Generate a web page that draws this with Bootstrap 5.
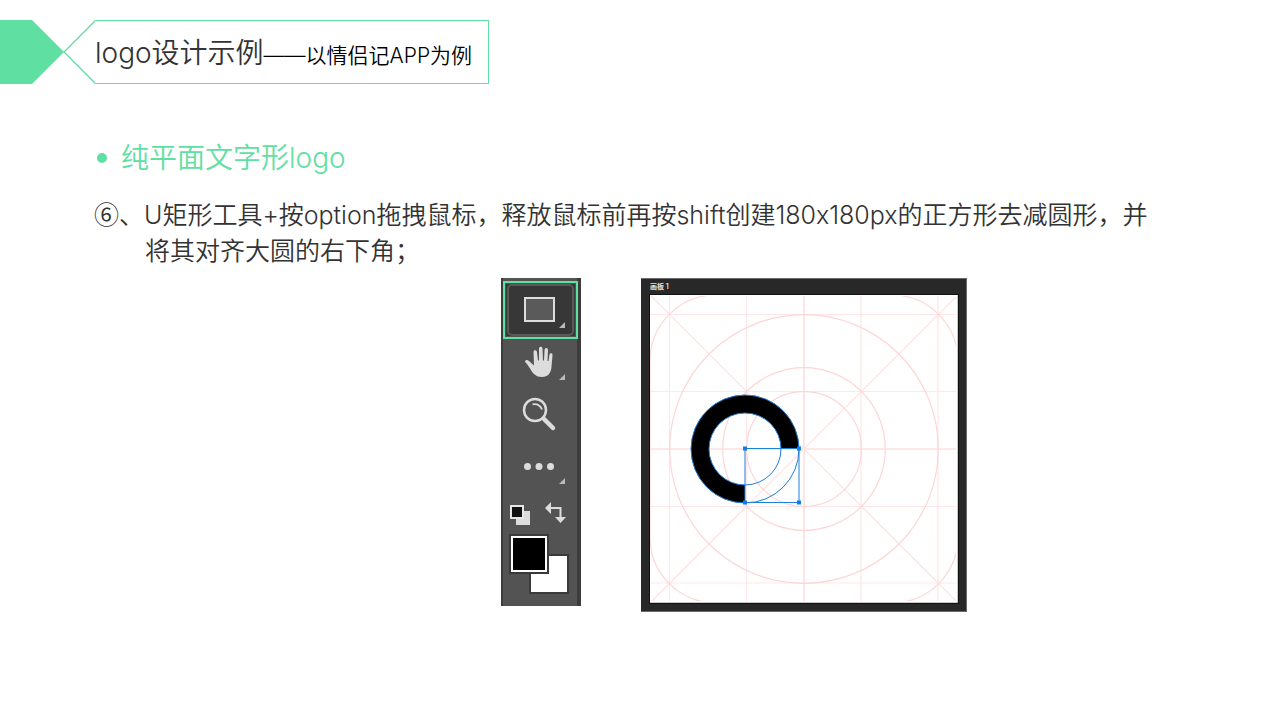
<!DOCTYPE html>
<html lang="zh-CN">
<head>
<meta charset="utf-8">
<meta name="viewport" content="width=device-width, initial-scale=1">
<title>logo设计示例</title>
<link href="https://cdn.jsdelivr.net/npm/bootstrap@5.3.0/dist/css/bootstrap.min.css" rel="stylesheet">
<style>
  :root { --mint: #5fe0a2; --panel: #535353; --panel-edge: #3c3c3c; }
  body { font-family: Inter, "Noto Sans CJK SC", sans-serif; font-weight: 350; color: #333; background: #fff; }
  .banner { padding-top: 20px; }
  .banner-title { height: 64px; border: 1px solid var(--mint); border-left: 0; padding-right: 16px; }
  .banner-title h1 { font-size: 28px; font-weight: 350; line-height: 64px; }
  .banner-title small { font-size: 21px; font-weight: 350; color: #000; }
  .content { padding: 54px 120px 0 95px; }
  .topic { font-size: 28px; font-weight: 350; line-height: 40px; color: var(--mint); gap: 14px; }
  .topic-dot { width: 10px; height: 10px; margin-left: 2px; background: var(--mint); }
  .step { font-size: 25px; line-height: 36px; margin-top: 19px; }
  .step-text { padding-left: 50px; text-indent: -51px; }
  .step-number { font-family: "Noto Sans CJK SC", sans-serif; line-height: 1; }
  .figures { gap: 60px; margin: 9px 0 0 406px; }
  .tool-panel { width: 80px; padding: 6px 0 0 3px; background: var(--panel); border: solid var(--panel-edge); border-width: 0 4px 0 2px; }
  .tool { width: 69px; height: 52px; background: transparent; border: 0; padding: 0; }
  .tool.active { background: #373737; outline: 2px solid var(--mint); outline-offset: 1px; }
  .swatches { margin-left: -3px; }
</style>
</head>
<body>
<header class="banner d-flex">
  <svg width="95" height="64" viewBox="0 0 95 64" class="flex-shrink-0" aria-hidden="true">
    <path d="M0 0H32L64 32L32 64H0Z" fill="#5fe0a2"/>
    <path d="M95.5 .5L64 32L95.5 63.5" fill="none" stroke="#5fe0a2" stroke-width="1.3"/>
  </svg>
  <div class="banner-title">
    <h1 class="mb-0 text-nowrap">logo设计示例<small>——以情侣记APP为例</small></h1>
  </div>
</header>
<main class="content">
  <h2 class="topic d-flex align-items-center mb-0"><span class="topic-dot rounded-circle"></span>纯平面文字形logo</h2>
  <div class="step"><p class="step-text mb-0"><span class="step-number">⑥、</span>U矩形工具+按option拖拽鼠标，释放鼠标前再按shift创建180x180px的正方形去减圆形，并将其对齐大圆的右下角；</p></div>
  <div class="figures d-flex align-items-start">
    <div class="tool-panel d-flex flex-column flex-shrink-0" role="toolbar" aria-label="工具">
      <button class="tool active" type="button" aria-label="矩形工具">
        <svg class="d-block" width="69" height="52" viewBox="0 0 69 52"><rect x="2" y="1" width="65" height="50" rx="4" fill="none" stroke="#595959" stroke-width="2"/><rect x="19" y="14" width="29" height="23" fill="#5a5a5a" stroke="#dcdcdc" stroke-width="2"/><path d="M59 38v6h-6z" fill="#b9b9b9"/></svg>
      </button>
      <button class="tool" type="button" aria-label="抓手工具">
        <svg class="d-block" width="69" height="52" viewBox="0 0 69 52"><path d="M27.5 37.500C25 35 22.500 29 19.500 26.500C18 24 21 23 23 25L28 29.500L27.500 16C27.500 13.500 30.800 13.500 31 16L32 24.500H33L33 12.500C33 10 36.500 10 36.500 12.500L37 24.500H38L38.600 13.500C38.800 11.300 42 11.300 42 14L41.500 25H42.500L43.500 18.500C44 16.500 46.800 17 46.500 19L45.500 31C45 37 42 41 36 41C32 41 30 40 27.500 37.500Z" fill="#dcdcdc"/><path d="M59 38v6h-6z" fill="#b9b9b9"/></svg>
      </button>
      <button class="tool" type="button" aria-label="缩放工具">
        <svg class="d-block" width="69" height="52" viewBox="0 0 69 52"><circle cx="29" cy="22" r="11" fill="none" stroke="#dcdcdc" stroke-width="2.500"/><path d="M26.500 16.300C31 15.500 34.500 18 36 21.500" fill="none" stroke="#dcdcdc" stroke-width="1.800"/><path d="M38 31L47 40" stroke="#dcdcdc" stroke-width="4.500" stroke-linecap="round"/><path d="M36.500 29.500L39 32" stroke="#dcdcdc" stroke-width="2.500"/></svg>
      </button>
      <button class="tool" type="button" aria-label="编辑工具栏">
        <svg class="d-block" width="69" height="52" viewBox="0 0 69 52"><g fill="#dcdcdc"><circle cx="21.500" cy="26.500" r="3.500"/><circle cx="33" cy="26.500" r="3.500"/><circle cx="44.500" cy="26.500" r="3.500"/></g><path d="M59 38v6h-6z" fill="#b9b9b9"/></svg>
      </button>
      <svg class="swatches d-block" width="74" height="114" viewBox="503 492 74 114" role="img" aria-label="前景色和背景色">
        <path d="M516 511h14v14h-14z" fill="#dcdcdc"/><rect x="511" y="506" width="12" height="12" fill="#111" stroke="#e6e6e6" stroke-width="2"/>
        <path d="M545 508L551 502V514ZM555 517H566L560.500 523Z" fill="#dcdcdc"/><path d="M551 508H560.500V517" fill="none" stroke="#dcdcdc" stroke-width="2"/>
        <rect x="530" y="555" width="38" height="38" fill="#fff" stroke="#3a3a3a" stroke-width="2"/>
        <rect x="509" y="534" width="40" height="40" fill="#3a3a3a"/><rect x="512" y="537" width="34" height="34" fill="#000" stroke="#fff" stroke-width="2"/>
      </svg>
    </div>
    <svg class="flex-shrink-0" width="326" height="334" viewBox="641 278 326 334" role="img" aria-label="画板 1">
      <defs><clipPath id="board"><rect x="650" y="296" width="306" height="305"/></clipPath></defs>
      <rect x="641" y="278" width="326" height="334" fill="#282828"/>
      <path d="M641 278.500H966.500V611.500H641" fill="none" stroke="#6b6b6b"/>
      <rect x="649" y="294" width="310" height="310" fill="#111"/>
      <rect x="650" y="295" width="307" height="307" fill="#fff"/>
      <path d="M650 602.500H957.500V295" fill="none" stroke="#c8c8c8"/>
      <text x="650" y="289" font-size="7" font-weight="600" fill="#e0e0e0">画板 1</text>
      <g clip-path="url(#board)" fill="none" stroke="#fdd6d6" stroke-width="1.200">
        <path d="M669.500 295V603M746.500 295V603M861 295V603M938 295V603M650 314.500H958M650 391.500H958M650 506.500H958M650 583H958" stroke="#ffe7e7"/>
        <path d="M804 295V603M650 449H958" stroke="#fddfdf" stroke-width="1.600"/>
        <path d="M650 295L958 603M958 295L650 603" stroke="#ffe1e1"/>
        <circle cx="804" cy="449" r="134.300"/><circle cx="804" cy="449" r="81.300"/><circle cx="804" cy="449" r="57.400"/>
        <rect x="650" y="295" width="308" height="308" rx="66"/>
      </g>
      <path d="M745 503A54 54 0 1 1 799 449H781A36 36 0 1 0 745 485Z" fill="#000"/>
      <g fill="none" stroke="#1f7fd8"><circle cx="745" cy="449" r="54"/><circle cx="745" cy="449" r="36"/><rect x="745" y="448.500" width="54" height="54"/></g>
      <path d="M743 446.500h4v4h-4zM797 446.500h4v4h-4zM743 500.500h4v4h-4zM797 500.500h4v4h-4z" fill="#0a7df0"/>
    </svg>
  </div>
</main>
<script src="https://cdn.jsdelivr.net/npm/bootstrap@5.3.0/dist/js/bootstrap.bundle.min.js"></script>
</body>
</html>
